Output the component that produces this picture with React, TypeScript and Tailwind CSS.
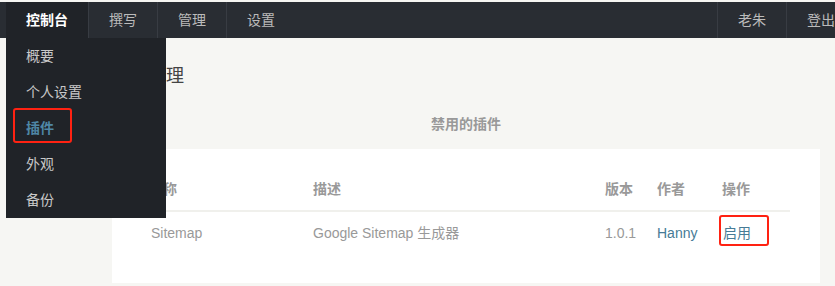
import React from 'react';

const font = "font-['Liberation_Sans','Noto_Sans_CJK_SC',sans-serif]";

const navTabs = ['撰写', '管理', '设置'];
const menuItems = ['概要', '个人设置', '插件', '外观', '备份'];

const App: React.FC = () => {
    return (
        <div className={`${font} relative w-[835px] h-[286px] overflow-hidden bg-[#f6f6f3] pt-[2px]`}>
            {/* Top nav */}
            <nav className="flex h-[36px] bg-[#292d33] text-[14px] pl-[6px]">
                <div className="flex items-center px-[20px] bg-[#202328] text-white font-bold">控制台</div>
                {navTabs.map((t) => (
                    <div key={t} className="flex items-center px-[20px] border-l border-[#383c43] text-[#bbbbbb]">
                        {t}
                    </div>
                ))}
                <div className="flex ml-auto -mr-[21px] border-r border-[#383c43]">
                    <div className="flex items-center px-[20px] border-l border-[#383c43] text-[#bbbbbb]">老朱</div>
                    <div className="flex items-center px-[20px] border-l border-[#383c43] text-[#bbbbbb]">登出</div>
                </div>
            </nav>

            {/* Dropdown menu */}
            <div className="absolute left-[6px] top-[38px] w-[160px] bg-[#202328] z-10">
                {menuItems.map((m) => (
                    <div
                        key={m}
                        className={`h-[36px] flex items-center pl-[20px] text-[14px] ${m === '插件' ? 'text-[#4f87a6] font-bold' : 'text-[#c8c8c8]'}`}
                    >
                        {m}
                    </div>
                ))}
                <div className="absolute left-[7px] top-[70px] w-[59px] h-[35px] border-2 border-[#ff2212] rounded-[3px]" />
            </div>

            {/* Main */}
            <main className="ml-[112px] w-[708px]">
                <h2 className="mt-[26px] h-[24px] leading-[24px] text-[18px] text-[#444444]">插件管理</h2>
                <div className="mt-[26px] h-[20px] leading-[20px] text-center text-[14px] font-bold text-[#999999]">
                    禁用的插件
                </div>
                <div className="mt-[15px] bg-white pt-[20px] pb-[29px] pr-[30px] text-[14px]">
                    <div className="grid grid-cols-[201px_292px_52px_65px_68px] h-[43px] items-center font-bold text-[#999999] border-b-2 border-[#f0f0ec]">
                        <div className="pl-[37px]">名称</div>
                        <div>描述</div>
                        <div>版本</div>
                        <div>作者</div>
                        <div>操作</div>
                    </div>
                    <div className="grid grid-cols-[201px_292px_52px_65px_68px] h-[42px] items-center text-[#999999]">
                        <div className="pl-[39px]">Sitemap</div>
                        <div>Google Sitemap 生成器</div>
                        <div>1.0.1</div>
                        <div className="text-[#467b96]">Hanny</div>
                        <div className="relative text-[#467b96]">
                            <span className="pl-[1px]">启用</span>
                            <div className="absolute -left-[3px] -top-[8px] w-[50px] h-[31px] border-2 border-[#ff2212] rounded-[3px]" />
                        </div>
                    </div>
                </div>
            </main>
        </div>
    );
};

export default App;
